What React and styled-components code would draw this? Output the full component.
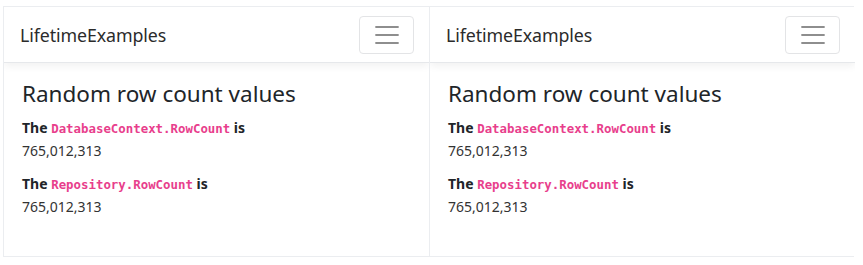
import React from 'react';
import styled, { createGlobalStyle } from 'styled-components';

const GlobalStyle = createGlobalStyle`
  html, body {
    margin: 0;
    padding: 0;
    background: #ffffff;
  }
  body {
    font-family: 'Noto Sans', 'Open Sans', sans-serif;
    color: #212529;
  }
`;

const Frame = styled.div`
  display: grid;
  grid-template-columns: 425px 426px;
  margin: 6px 0 0 3px;
  width: 851px;
  height: 251px;
  border: 1px solid #ebedf0;
  box-sizing: border-box;
`;

const Panel = styled.div`
  display: flex;
  flex-direction: column;
  border-left: ${props => (props.divided ? '1px solid #ebedf0' : 'none')};
  background: #fff;
  overflow: hidden;
`;

const Navbar = styled.header`
  display: flex;
  align-items: center;
  justify-content: space-between;
  height: 56px;
  padding: 0 15px 0 16px;
  border-bottom: 1px solid #e6e8eb;
  box-shadow: 0 3px 8px rgba(0, 0, 0, 0.06);
  box-sizing: border-box;
  position: relative;
`;

const Brand = styled.span`
  font-size: 17.8px;
  color: #2b2b2b;
  letter-spacing: -0.1px;
`;

const Toggler = styled.button`
  display: flex;
  align-items: center;
  justify-content: center;
  width: 55px;
  height: 38px;
  padding: 0;
  background: #fff;
  border: 1px solid #e3e4e6;
  border-radius: 4px;
`;

const Content = styled.main`
  padding: 14px 18px 0 18px;
`;

const Heading = styled.h3`
  margin: 0 0 5px 0;
  font-size: 22.5px;
  font-weight: 400;
  line-height: 34px;
  color: #212529;
`;

const Para = styled.p`
  margin: 0 0 10px 0;
  font-size: 14px;
  line-height: 23px;
  color: #333;
`;

const Strong = styled.strong`
  font-weight: 700;
  color: #212529;
`;

const Code = styled.code`
  font-family: 'DejaVu Sans Mono', monospace;
  font-size: 12.4px;
  line-height: 1;
  color: #e83e8c;
`;

const HamburgerIcon = () => (
  <svg width="24" height="20" viewBox="0 0 24 20">
    <g stroke="#8e8e8e" strokeWidth="1.8" strokeLinecap="round">
      <line x1="1" y1="2" x2="23" y2="2" />
      <line x1="1" y1="10" x2="23" y2="10" />
      <line x1="1" y1="18" x2="23" y2="18" />
    </g>
  </svg>
);

const rows = [
  { name: 'DatabaseContext.RowCount', value: '765,012,313' },
  { name: 'Repository.RowCount', value: '765,012,313' }
];

const ExamplePanel = ({ divided }) => (
  <Panel divided={divided}>
    <Navbar>
      <Brand>LifetimeExamples</Brand>
      <Toggler aria-label="Toggle navigation">
        <HamburgerIcon />
      </Toggler>
    </Navbar>
    <Content>
      <Heading>Random row count values</Heading>
      {rows.map(row => (
        <Para key={row.name}>
          <Strong>
            The <Code>{row.name}</Code> is
          </Strong>
          <br />
          {row.value}
        </Para>
      ))}
    </Content>
  </Panel>
);

const App = () => (
  <>
    <GlobalStyle />
    <Frame>
      <ExamplePanel />
      <ExamplePanel divided />
    </Frame>
  </>
);

export default App;
